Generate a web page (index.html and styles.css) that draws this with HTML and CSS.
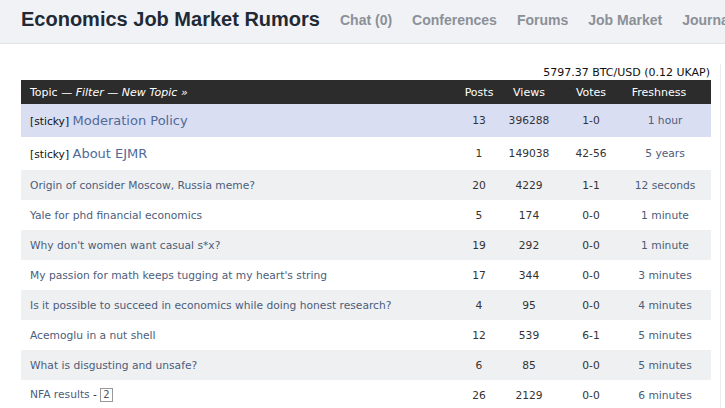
FILE: index.html
```html
<!DOCTYPE html>
<html lang="en">
<head>
  <meta charset="UTF-8">
  <title>Economics Job Market Rumors</title>
  <link rel="stylesheet" href="styles.css">
</head>
<body>
  <div class="topbar">
    <div class="site-title">Economics Job Market Rumors</div>
    <nav class="nav">
      <a href="#">Chat (0)</a>
      <a href="#">Conferences</a>
      <a href="#">Forums</a>
      <a href="#">Job Market</a>
      <a href="#">Journals</a>
    </nav>
  </div>

  <div class="page">
    <div class="main">
      <div class="ticker">5797.37 BTC/USD (0.12 UKAP)</div>
      <table class="topics">
        <thead>
          <tr>
            <th class="topic">Topic &mdash; <em>Filter</em> &mdash; <em>New Topic &raquo;</em></th>
            <th class="posts">Posts</th>
            <th class="views">Views</th>
            <th class="votes">Votes</th>
            <th class="fresh">Freshness</th>
          </tr>
        </thead>
        <tbody>
          <tr class="sticky super">
            <td class="topic">[sticky] <a href="#">Moderation Policy</a></td>
            <td>13</td><td>396288</td><td>1-0</td><td class="fresh"><a href="#">1 hour</a></td>
          </tr>
          <tr class="sticky">
            <td class="topic">[sticky] <a href="#">About EJMR</a></td>
            <td>1</td><td>149038</td><td>42-56</td><td class="fresh"><a href="#">5 years</a></td>
          </tr>
          <tr class="alt">
            <td class="topic"><a href="#">Origin of consider Moscow, Russia meme?</a></td>
            <td>20</td><td>4229</td><td>1-1</td><td class="fresh"><a href="#">12 seconds</a></td>
          </tr>
          <tr>
            <td class="topic"><a href="#">Yale for phd financial economics</a></td>
            <td>5</td><td>174</td><td>0-0</td><td class="fresh"><a href="#">1 minute</a></td>
          </tr>
          <tr class="alt">
            <td class="topic"><a href="#">Why don't women want casual s*x?</a></td>
            <td>19</td><td>292</td><td>0-0</td><td class="fresh"><a href="#">1 minute</a></td>
          </tr>
          <tr>
            <td class="topic"><a href="#">My passion for math keeps tugging at my heart's string</a></td>
            <td>17</td><td>344</td><td>0-0</td><td class="fresh"><a href="#">3 minutes</a></td>
          </tr>
          <tr class="alt">
            <td class="topic"><a href="#">Is it possible to succeed in economics while doing honest research?</a></td>
            <td>4</td><td>95</td><td>0-0</td><td class="fresh"><a href="#">4 minutes</a></td>
          </tr>
          <tr>
            <td class="topic"><a href="#">Acemoglu in a nut shell</a></td>
            <td>12</td><td>539</td><td>6-1</td><td class="fresh"><a href="#">5 minutes</a></td>
          </tr>
          <tr class="alt">
            <td class="topic"><a href="#">What is disgusting and unsafe?</a></td>
            <td>6</td><td>85</td><td>0-0</td><td class="fresh"><a href="#">5 minutes</a></td>
          </tr>
          <tr>
            <td class="topic"><a href="#">NFA results</a> - <span class="pager">2</span></td>
            <td>26</td><td>2129</td><td>0-0</td><td class="fresh"><a href="#">6 minutes</a></td>
          </tr>
        </tbody>
      </table>
    </div>
    <div class="sidebar"></div>
  </div>
</body>
</html>
```

FILE: styles.css
```css
body {
  margin: 0;
  padding: 0;
  background: #fff;
  font-family: "DejaVu Sans", Verdana, sans-serif;
  overflow: hidden;
}

a {
  text-decoration: none;
}

.topbar {
  height: 44px;
  background-color: #f1f2f5;
  border-bottom: 1px solid #e1e3e7;
  display: flex;
  align-items: center;
  padding: 0 0 4px 21px;
  box-sizing: border-box;
  white-space: nowrap;
}

.site-title {
  font-family: "Liberation Sans", Arial, sans-serif;
  font-weight: bold;
  font-size: 20px;
  color: #1f2a36;
  margin-right: 20px;
}

.nav {
  display: flex;
  gap: 20px;
}

.nav a {
  font-family: "Liberation Sans", Arial, sans-serif;
  font-weight: bold;
  font-size: 14px;
  color: #8b9098;
}

.page {
  display: flex;
  padding-left: 21px;
}

.main {
  width: 690px;
}

.sidebar {
  flex: 1;
  margin-left: 9px;
  margin-top: 20px;
  border-left: 1px solid #ececec;
  height: 400px;
}

.ticker {
  text-align: right;
  font-size: 11px;
  color: #111;
  padding: 22px 1px 1px 0;
  line-height: 13px;
}

.topics {
  width: 690px;
  border-collapse: collapse;
  font-size: 10.7px;
}

.topics th {
  background-color: #2c2c2c;
  color: #fff;
  font-weight: normal;
  font-size: 11px;
  height: 24px;
  padding: 0;
}

.topics th.topic {
  text-align: left;
  padding-left: 9px;
}

.topics td {
  height: 30px;
  padding: 0;
  text-align: center;
  color: #333;
}

.topics td.topic {
  text-align: left;
  padding-left: 9px;
}

.topics .posts { width: 48px; }
.topics .views { width: 52px; }
.topics .votes { width: 72px; }
.topics td.fresh { width: 76px; padding-right: 8px; }
.topics th.fresh { width: 64px; padding-right: 20px; }

.topics td a {
  color: #4b5d7b;
}

.topics tr.alt td {
  background-color: #eff0f2;
}

.topics tr.sticky td {
  height: 33px;
}

.topics tr.sticky td.topic {
  color: #111;
}

.topics tr.sticky td.topic a {
  font-size: 13px;
  color: #4e6a99;
}

.topics tr.super td {
  background-color: #dadef3;
}

.pager {
  display: inline-block;
  border: 1px solid #999;
  font-size: 10px;
  line-height: 12px;
  padding: 0 2px;
  color: #555;
}
```
